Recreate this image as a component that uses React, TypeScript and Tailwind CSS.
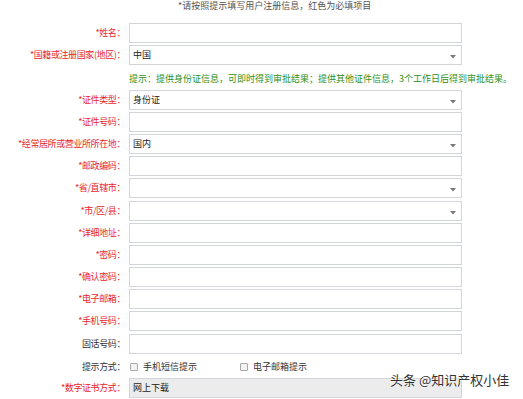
import React from 'react';

type Field = {
  label: string;
  required?: boolean;
  kind?: 'input' | 'select' | 'readonly';
  value?: string;
};

const FONT = { fontFamily: '"Noto Sans CJK SC", "Noto Sans", sans-serif' };

function Arrow() {
  return (
    <svg width="6" height="4" viewBox="0 0 6 4" className="absolute right-[5px] top-[9px]">
      <path d="M0 0 L6 0 L3 3.5 Z" fill="#7a7a7a" />
    </svg>
  );
}

function Row({ label, required = true, kind = 'input', value }: Field) {
  return (
    <div className="flex h-[22.2px] items-start">
      <div
        className={`w-[125px] shrink-0 text-right text-[9px] leading-[20px] tracking-[-0.4px] ${
          required ? 'text-[#e8262a]' : 'text-[#333]'
        }`}
      >
        {required && '*'}
        {label}：
      </div>
      <div
        className={`relative ml-[4px] h-[20px] w-[333px] border border-[#d2d5da] ${
          kind === 'readonly' ? 'bg-[#ececec]' : 'bg-white'
        }`}
      >
        {value && (
          <span className="absolute left-[3px] top-0 text-[9px] leading-[18px] text-[#222]">{value}</span>
        )}
        {kind === 'select' && <Arrow />}
      </div>
    </div>
  );
}

function Check({ label }: { label: string }) {
  return (
    <span className="flex items-center">
      <span className="h-[8px] w-[8px] rounded-[1px] border border-[#a9a9a9] bg-[#f2f2f2]" />
      <span className="ml-[5px] text-[9px] text-[#333]">{label}</span>
    </span>
  );
}

export default function App() {
  const top: Field[] = [
    { label: '姓名' },
    { label: '国籍或注册国家(地区)', kind: 'select', value: '中国' },
  ];
  const rest: Field[] = [
    { label: '证件类型', kind: 'select', value: '身份证' },
    { label: '证件号码' },
    { label: '经常居所或营业所所在地', kind: 'select', value: '国内' },
    { label: '邮政编码' },
    { label: '省/直辖市', kind: 'select' },
    { label: '市/区/县', kind: 'select' },
    { label: '详细地址' },
    { label: '密码' },
    { label: '确认密码' },
    { label: '电子邮箱' },
    { label: '手机号码' },
    { label: '固话号码', required: false },
  ];

  return (
    <div className="relative h-[399px] w-[523px] overflow-hidden bg-white" style={FONT}>
      <div className="h-[12px] pl-[178px] text-[9px] leading-[12px] text-[#555]">
        *请按照提示填写用户注册信息，红色为必填项目
      </div>
      <div className="mt-[11px]">
        {top.map((f) => (
          <Row key={f.label} {...f} />
        ))}
        <div className="flex h-[22.2px] items-center pl-[129px] text-[9px] text-[#2f8f22]">
          提示：提供身份证信息，可即时得到审批结果；提供其他证件信息，3个工作日后得到审批结果。
        </div>
        {rest.map((f) => (
          <Row key={f.label} {...f} />
        ))}
        <div className="flex h-[22.2px] items-center">
          <div className="w-[125px] shrink-0 text-right text-[9px] tracking-[-0.4px] text-[#333]">提示方式：</div>
          <div className="ml-[5px] flex items-center gap-[43px]">
            <Check label="手机短信提示" />
            <Check label="电子邮箱提示" />
          </div>
        </div>
        <Row label="数字证书方式" kind="readonly" value="网上下载" />
      </div>
      <div
        className="absolute left-[390px] top-[372px] text-[13px] leading-[16px] text-[#333]"
        style={{ textShadow: '0 0 2px #fff, 0 0 2px #fff' }}
      >
        头条 @知识产权小佳
      </div>
    </div>
  );
}
